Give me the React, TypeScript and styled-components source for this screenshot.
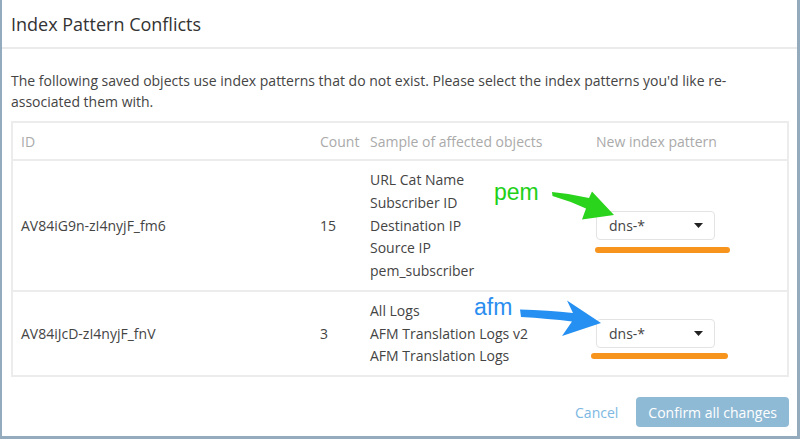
import React from 'react'
import styled, {createGlobalStyle} from 'styled-components'

const GlobalStyle = createGlobalStyle`
    html, body {
        margin: 0;
        padding: 0;
        background: #93abbd;
    }
    body {
        font-family: "Open Sans", "Noto Sans", sans-serif;
        font-size: 14px;
        color: #444;
    }
`

const Modal = styled.div`
    margin: 0 3px 0 2px;
    height: 436px;
    background: #fff;
    box-sizing: border-box;
    display: flex;
    flex-direction: column;
`

const Header = styled.div`
    height: 47px;
    border-bottom: 2px solid #ebebeb;
    display: flex;
    align-items: center;
    padding: 0 9px;
`

const Title = styled.h1`
    margin: 0;
    font-size: 18px;
    font-weight: 400;
    color: #333;
`

const Body = styled.div`
    padding: 21px 8px 0 9px;
`

const Intro = styled.p`
    margin: 0 0 9px;
    line-height: 21px;
    color: #444;
`

const Table = styled.table`
    width: 100%;
    border-collapse: collapse;
    border: 2px solid #ececec;
    table-layout: fixed;
`

// widths are content widths: the 8px side padding comes on top
const HeadCell = styled.th<{width?: number}>`
    width: ${(p) => (p.width ? `${p.width}px` : 'auto')};
    text-align: left;
    font-weight: 400;
    color: #aaa;
    padding: 0 8px;
    height: 36px;
    border-bottom: 2px solid #ececec;
`

const Row = styled.tr`
    & + & td {
        border-top: 2px solid #ececec;
    }
`

const Cell = styled.td`
    padding: 8px 8px 7px;
    vertical-align: middle;
    color: #444;
    line-height: 22.75px;
`

const PatternCell = styled(Cell)`
    position: relative;
`

const Select = styled.div`
    width: 119px;
    height: 29px;
    box-sizing: border-box;
    border: 1px solid #e3e3e3;
    border-radius: 4px;
    display: flex;
    align-items: center;
    justify-content: space-between;
    padding: 0 11px 0 12px;
    color: #444;
`

const Highlight = styled.div<{top: number; left: number; width: number}>`
    position: absolute;
    top: ${(p) => p.top}px;
    left: ${(p) => p.left}px;
    width: ${(p) => p.width}px;
    height: 6px;
    border-radius: 3px;
    background: #f7941e;
`

const Note = styled.span<{top: number; left: number; color: string}>`
    position: absolute;
    top: ${(p) => p.top}px;
    left: ${(p) => p.left}px;
    font-family: "Liberation Sans", Arial, sans-serif;
    font-size: 23px;
    line-height: 23px;
    color: ${(p) => p.color};
`

const ArrowSvg = styled.svg<{top: number; left: number}>`
    position: absolute;
    top: ${(p) => p.top}px;
    left: ${(p) => p.left}px;
    overflow: visible;
`

const Footer = styled.div`
    margin-top: auto;
    padding: 0 8px 9px;
    display: flex;
    justify-content: flex-end;
    align-items: center;
`

const CancelButton = styled.button`
    border: none;
    background: none;
    padding: 0;
    margin-right: 18px;
    font: inherit;
    color: #7cb8e2;
`

const ConfirmButton = styled.button`
    height: 30px;
    border: none;
    border-radius: 4px;
    padding: 0 12px;
    background: #8fbad5;
    color: #fff;
    font: inherit;
`

const Caret = () => (
    <svg width="9" height="5" viewBox="0 0 9 5">
        <path d="M0 0 L9 0 L4.5 5 Z" fill="#222" />
    </svg>
)

type Conflict = {
    id: string
    count: number
    samples: string[]
    note: string
    noteColor: string
}

const conflicts: Conflict[] = [
    {
        id: 'AV84iG9n-zI4nyjF_fm6',
        count: 15,
        samples: ['URL Cat Name', 'Subscriber ID', 'Destination IP', 'Source IP', 'pem_subscriber'],
        note: 'pem',
        noteColor: '#22d018',
    },
    {
        id: 'AV84iJcD-zI4nyjF_fnV',
        count: 3,
        samples: ['All Logs', 'AFM Translation Logs v2', 'AFM Translation Logs'],
        note: 'afm',
        noteColor: '#2a8ef0',
    },
]

// annotation drawings, in page coordinates; the cell starts at x 588
const PemArrow = () => (
    <ArrowSvg top={25} left={-42} width="70" height="35" viewBox="546 185 70 35">
        <path
            d="M552 191 Q570 192.5 589 197 L592 190.5 L614 214 L582 218.5 L586 207.5 Q570 200 552.5 195 Z"
            fill="#2ad41c"
        />
    </ArrowSvg>
)

const AfmArrow = () => (
    <ArrowSvg top={4} left={-70} width="85" height="40" viewBox="518 295 85 40">
        <path
            d="M520 308.5 Q548 309 573 312 L567 299.5 L601 322 L562 335 L572 320.5 Q548 317.5 521 316 Z"
            fill="#2590f2"
        />
    </ArrowSvg>
)

const annotations = [
    {noteTop: 20, noteLeft: -94, arrow: <PemArrow />, barTop: 86, barLeft: 7, barWidth: 135},
    {noteTop: 4, noteLeft: -114, arrow: <AfmArrow />, barTop: 61, barLeft: 3, barWidth: 137},
]

export default function App() {
    return (
        <>
            <GlobalStyle />
            <Modal>
                <Header>
                    <Title>Index Pattern Conflicts</Title>
                </Header>
                <Body>
                    <Intro>
                        The following saved objects use index patterns that do not exist. Please select the index
                        patterns you'd like re-associated them with.
                    </Intro>
                    <Table>
                        <thead>
                            <tr>
                                <HeadCell width={283}>ID</HeadCell>
                                <HeadCell width={34}>Count</HeadCell>
                                <HeadCell width={210}>Sample of affected objects</HeadCell>
                                <HeadCell>New index pattern</HeadCell>
                            </tr>
                        </thead>
                        <tbody>
                            {conflicts.map((c, i) => {
                                const a = annotations[i]
                                return (
                                    <Row key={c.id}>
                                        <Cell>{c.id}</Cell>
                                        <Cell>{c.count}</Cell>
                                        <Cell>
                                            {c.samples.map((s) => (
                                                <div key={s}>{s}</div>
                                            ))}
                                        </Cell>
                                        <PatternCell>
                                            <Select>
                                                <span>dns-*</span>
                                                <Caret />
                                            </Select>
                                            <Note top={a.noteTop} left={a.noteLeft} color={c.noteColor}>
                                                {c.note}
                                            </Note>
                                            {a.arrow}
                                            <Highlight top={a.barTop} left={a.barLeft} width={a.barWidth} />
                                        </PatternCell>
                                    </Row>
                                )
                            })}
                        </tbody>
                    </Table>
                </Body>
                <Footer>
                    <CancelButton>Cancel</CancelButton>
                    <ConfirmButton>Confirm all changes</ConfirmButton>
                </Footer>
            </Modal>
        </>
    )
}
